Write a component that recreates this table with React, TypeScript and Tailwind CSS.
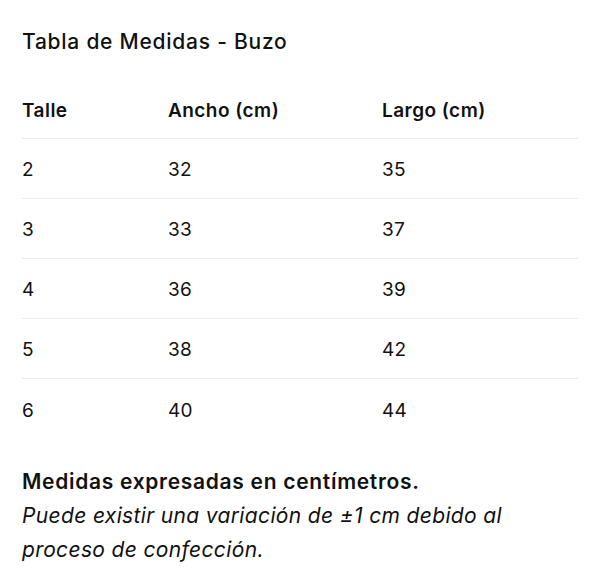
import React from "react";

const rows = [
  ["2", "32", "35"],
  ["3", "33", "37"],
  ["4", "36", "39"],
  ["5", "38", "42"],
  ["6", "40", "44"],
];

export default function App() {
  return (
    <div
      className="w-[600px] h-[572px] bg-white text-[#111111] px-[22px] pt-[27px]"
      style={{ fontFamily: "Inter, 'Noto Sans', sans-serif" }}
    >
      <h1 className="text-[21px] leading-[30px] font-medium tracking-[0.75px]">Tabla de Medidas - Buzo</h1>
      <div className="mt-[26px] w-[556px]">
        <div className="grid grid-cols-[146px_214px_1fr] h-[56px] pt-[2px] items-center border-b border-[#ececec] text-[19px] font-semibold tracking-[0.45px]">
          <div>Talle</div>
          <div>Ancho (cm)</div>
          <div>Largo (cm)</div>
        </div>
        {rows.map((r, i) => (
          <div
            key={r[0]}
            className={
              i < rows.length - 1
                ? "grid grid-cols-[146px_214px_1fr] h-[60px] pt-[4px] items-center border-b border-[#ececec] text-[19px] tracking-[0.3px]"
                : "grid grid-cols-[146px_214px_1fr] h-[60px] pt-[4px] items-center text-[19px] tracking-[0.3px]"
            }
          >
            <div>{r[0]}</div>
            <div>{r[1]}</div>
            <div>{r[2]}</div>
          </div>
        ))}
      </div>
      <div className="mt-[26px] text-[21px] leading-[34px]">
        <p className="font-semibold tracking-[0.7px]">Medidas expresadas en centímetros.</p>
        <p className="italic tracking-[0.35px]">
          Puede existir una variación de ±1 cm debido al
          <br />
          proceso de confección.
        </p>
      </div>
    </div>
  );
}
